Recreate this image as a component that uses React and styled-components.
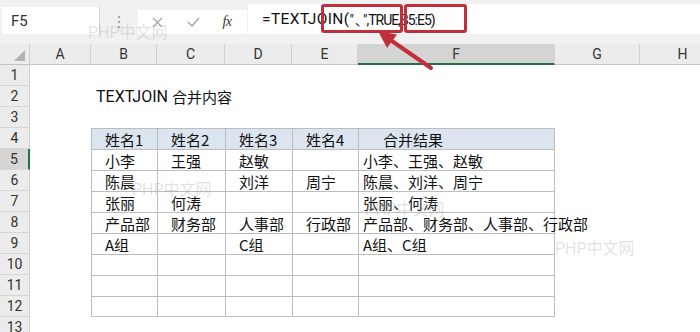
import React from "react";
import styled, { createGlobalStyle } from "styled-components";

const Global = createGlobalStyle`
  html, body { margin: 0; padding: 0; background: #ffffff; }
  body { overflow: hidden; font-family: "Noto Sans CJK SC", "Noto Sans", sans-serif; }
`;

const LATIN = `Roboto, "Noto Sans", "Noto Sans CJK SC", sans-serif`;
const CJK = `"Noto Sans CJK SC", "Noto Sans", sans-serif`;
const GREEN = "#217346";
const RED = "#c1303a";
const GRID_LINE = "#bdbdbd";

const Page = styled.div`
  position: relative;
  width: 700px;
  height: 332px;
  overflow: hidden;
  background: #ffffff;
`;

const FormulaBar = styled.div`
  display: flex;
  align-items: flex-end;
  height: 44px;
  padding-bottom: 10px;
  box-sizing: border-box;
  background: #f1f1f1;
`;

const NameBox = styled.div`
  margin-left: 2px;
  width: 98px;
  height: 27px;
  box-sizing: border-box;
  background: #ffffff;
  border-right: 1px solid #d6d6d6;
  display: flex;
  align-items: center;
  padding-left: 9px;
  font-family: ${LATIN};
  font-size: 15px;
  color: #333;
`;

const DotsWrap = styled.div`
  width: 38px;
  height: 24px;
  display: flex;
  align-items: center;
  justify-content: center;
`;

const FxBox = styled.div`
  width: 109px;
  height: 24px;
  background: #ffffff;
  display: flex;
  align-items: center;
`;

const FxIcon = styled.span`
  width: ${(p) => p.$w}px;
  display: flex;
  justify-content: center;
  align-items: center;
`;

const FxText = styled.span`
  font-family: "Liberation Serif", serif;
  font-style: italic;
  font-size: 14px;
  color: #333;
  letter-spacing: -0.5px;
`;

const FormulaInput = styled.div`
  margin-left: 1px;
  flex: 1;
  height: 30px;
  background: #ffffff;
  display: flex;
  align-items: center;
  padding-left: 14px;
  font-family: ${LATIN};
  color: #111;
  white-space: nowrap;
`;

const FormulaPart = styled.span`
  font-size: ${(p) => p.$size}px;
  letter-spacing: ${(p) => p.$ls}px;
`;

const Dun = styled.span`
  display: inline-block;
  width: 8px;
  margin-left: 2px;
  font-family: ${CJK};
  font-size: 13px;
  overflow: visible;
`;

const Sheet = styled.div`
  display: grid;
  grid-template-columns: 30px 61px 66px 68px 67px 66px 197px 85px 86px;
  grid-template-rows: repeat(14, 21px);
  width: 726px;
`;

const Corner = styled.div`
  background: #ececec;
  border-right: 1px solid #cfcfcf;
  border-bottom: 1px solid #c4c4c4;
  box-sizing: border-box;
  display: flex;
  align-items: flex-end;
  justify-content: flex-end;
  padding: 0 4px 3px 0;
`;

const ColHead = styled.div`
  box-sizing: border-box;
  background: ${(p) => (p.$sel ? "#d4d4d4" : "#ececec")};
  border-right: 1px solid #d2d2d2;
  border-bottom: ${(p) => (p.$sel ? `2px solid ${GREEN}` : "1px solid #c4c4c4")};
  display: flex;
  align-items: center;
  justify-content: center;
  font-family: ${LATIN};
  font-size: 14px;
  color: ${(p) => (p.$sel ? "#3a3a3a" : "#333")};
`;

const RowHead = styled.div`
  box-sizing: border-box;
  background: ${(p) => (p.$sel ? "#d6d6d6" : "#ececec")};
  border-right: ${(p) => (p.$sel ? `2px solid ${GREEN}` : "1px solid #cfcfcf")};
  border-bottom: 1px solid #d6d6d6;
  display: flex;
  align-items: center;
  justify-content: center;
  font-family: ${LATIN};
  font-size: 14px;
  color: #333;
`;

const Cell = styled.div`
  box-sizing: border-box;
  position: relative;
  display: flex;
  align-items: center;
  white-space: nowrap;
  overflow: visible;
  padding-left: ${(p) => p.$pad || 0}px;
  font-family: ${CJK};
  font-size: 15px;
  color: #111;
  background: ${(p) => (p.$fill ? "#dce4ef" : "transparent")};
  border-top: ${(p) => (p.$table ? `1px solid ${GRID_LINE}` : "none")};
  border-left: ${(p) => (p.$table ? `1px solid ${GRID_LINE}` : "none")};
  border-right: ${(p) => (p.$right ? `1px solid ${GRID_LINE}` : "none")};
  border-bottom: ${(p) => (p.$bottom ? `1px solid ${GRID_LINE}` : "none")};
  z-index: ${(p) => (p.$over ? 1 : 0)};
`;

const Title = styled.div`
  grid-column: span 4;
  display: flex;
  align-items: center;
  padding-left: 5px;
  font-family: ${LATIN};
  font-size: 16px;
  color: #111;
  white-space: nowrap;
`;

const TitleCjk = styled.span`
  font-family: ${CJK};
  font-size: 15px;
  margin-left: 4px;
`;

const RedBox = styled.div`
  position: absolute;
  top: 4px;
  left: ${(p) => p.$x}px;
  width: ${(p) => p.$w}px;
  height: 29px;
  box-sizing: border-box;
  border: 3px solid ${RED};
  border-radius: 3px;
  pointer-events: none;
`;

const Overlay = styled.svg`
  position: absolute;
  left: 0;
  top: 0;
  pointer-events: none;
`;

const Watermark = styled.div`
  position: absolute;
  left: ${(p) => p.$x}px;
  top: ${(p) => p.$y}px;
  font-family: ${LATIN};
  font-size: 16px;
  color: rgba(150, 150, 150, 0.28);
  white-space: nowrap;
  pointer-events: none;
  z-index: 3;
`;

const cols = ["A", "B", "C", "D", "E", "F", "G", "H"];

const data = {
  4: ["姓名1", "姓名2", "姓名3", "姓名4", "合并结果"],
  5: ["小李", "王强", "赵敏", "", "小李、王强、赵敏"],
  6: ["陈晨", "", "刘洋", "周宁", "陈晨、刘洋、周宁"],
  7: ["张丽", "何涛", "", "", "张丽、何涛"],
  8: ["产品部", "财务部", "人事部", "行政部", "产品部、财务部、人事部、行政部"],
  9: ["A组", "", "C组", "", "A组、C组"],
  10: ["", "", "", "", ""],
  11: ["", "", "", "", ""],
  12: ["", "", "", "", ""],
};

function CornerTriangle() {
  return (
    <svg width="11" height="11" viewBox="0 0 11 11">
      <polygon points="11,0 11,11 0,11" fill="#b4b4b4" />
    </svg>
  );
}

function Dots() {
  return (
    <svg width="4" height="14" viewBox="0 0 4 14">
      <circle cx="2" cy="2" r="1.2" fill="#a8a8a8" />
      <circle cx="2" cy="7" r="1.2" fill="#a8a8a8" />
      <circle cx="2" cy="12" r="1.2" fill="#a8a8a8" />
    </svg>
  );
}

function Row({ r }) {
  const cells = [];
  cells.push(
    <RowHead key="h" $sel={r === 5}>
      {r}
    </RowHead>
  );
  cells.push(<Cell key="A" />);
  if (r === 2) {
    cells.push(
      <Title key="t">
        TEXTJOIN<TitleCjk>合并内容</TitleCjk>
      </Title>
    );
    cells.push(<Cell key="F" />, <Cell key="G" />, <Cell key="H" />);
    return cells;
  }
  const row = data[r];
  for (let i = 0; i < 5; i++) {
    const inTable = !!row;
    const isF = i === 4;
    const pad = isF ? (r === 4 ? 24 : 4) : 13;
    cells.push(
      <Cell
        key={cols[i + 1]}
        $table={inTable}
        $right={inTable && isF}
        $bottom={inTable && r === 12}
        $fill={r === 4}
        $pad={inTable ? pad : 0}
        $over={isF}
      >
        {row ? row[i] : ""}
      </Cell>
    );
  }
  cells.push(<Cell key="G" />, <Cell key="H" />);
  return cells;
}

export default function App() {
  const rows = [];
  for (let r = 1; r <= 13; r++) rows.push(<Row key={r} r={r} />);
  return (
    <Page>
      <Global />
      <FormulaBar>
        <NameBox>F5</NameBox>
        <DotsWrap>
          <Dots />
        </DotsWrap>
        <FxBox>
          <FxIcon $w={38}>
            <svg width="11" height="11" viewBox="0 0 11 11">
              <path d="M1 1 L10 10 M10 1 L1 10" stroke="#a6a6a6" strokeWidth="1.3" fill="none" />
            </svg>
          </FxIcon>
          <FxIcon $w={34}>
            <svg width="13" height="10" viewBox="0 0 13 10">
              <path d="M1 5 L5 9 L12 1" stroke="#a6a6a6" strokeWidth="1.4" fill="none" />
            </svg>
          </FxIcon>
          <FxIcon $w={34}>
            <FxText>fx</FxText>
          </FxIcon>
        </FxBox>
        <FormulaInput>
          <FormulaPart $size={15.5} $ls={0.4}>=TEXTJOIN(</FormulaPart>
          <FormulaPart $size={14} $ls={-1}>
            "<Dun>、</Dun>",TRUE,B5:E5)
          </FormulaPart>
        </FormulaInput>
      </FormulaBar>
      <Sheet>
        <Corner>
          <CornerTriangle />
        </Corner>
        {cols.map((c) => (
          <ColHead key={c} $sel={c === "F"}>
            {c}
          </ColHead>
        ))}
        {rows}
      </Sheet>

      <RedBox $x={321} $w={82} />
      <RedBox $x={404} $w={63} />
      <Overlay width="700" height="332" viewBox="0 0 700 332">
        <line x1="431" y1="68" x2="389" y2="39" stroke={RED} strokeWidth="4" strokeLinecap="round" />
        <polygon points="378,31 397,34.5 387,48" fill={RED} />
      </Overlay>

      <Watermark $x={88} $y={19}>PHP中文网</Watermark>
      <Watermark $x={132} $y={176}>PHP中文网</Watermark>
      <Watermark $x={365} $y={196}>PHP中文网</Watermark>
      <Watermark $x={555} $y={235}>PHP中文网</Watermark>
    </Page>
  );
}
